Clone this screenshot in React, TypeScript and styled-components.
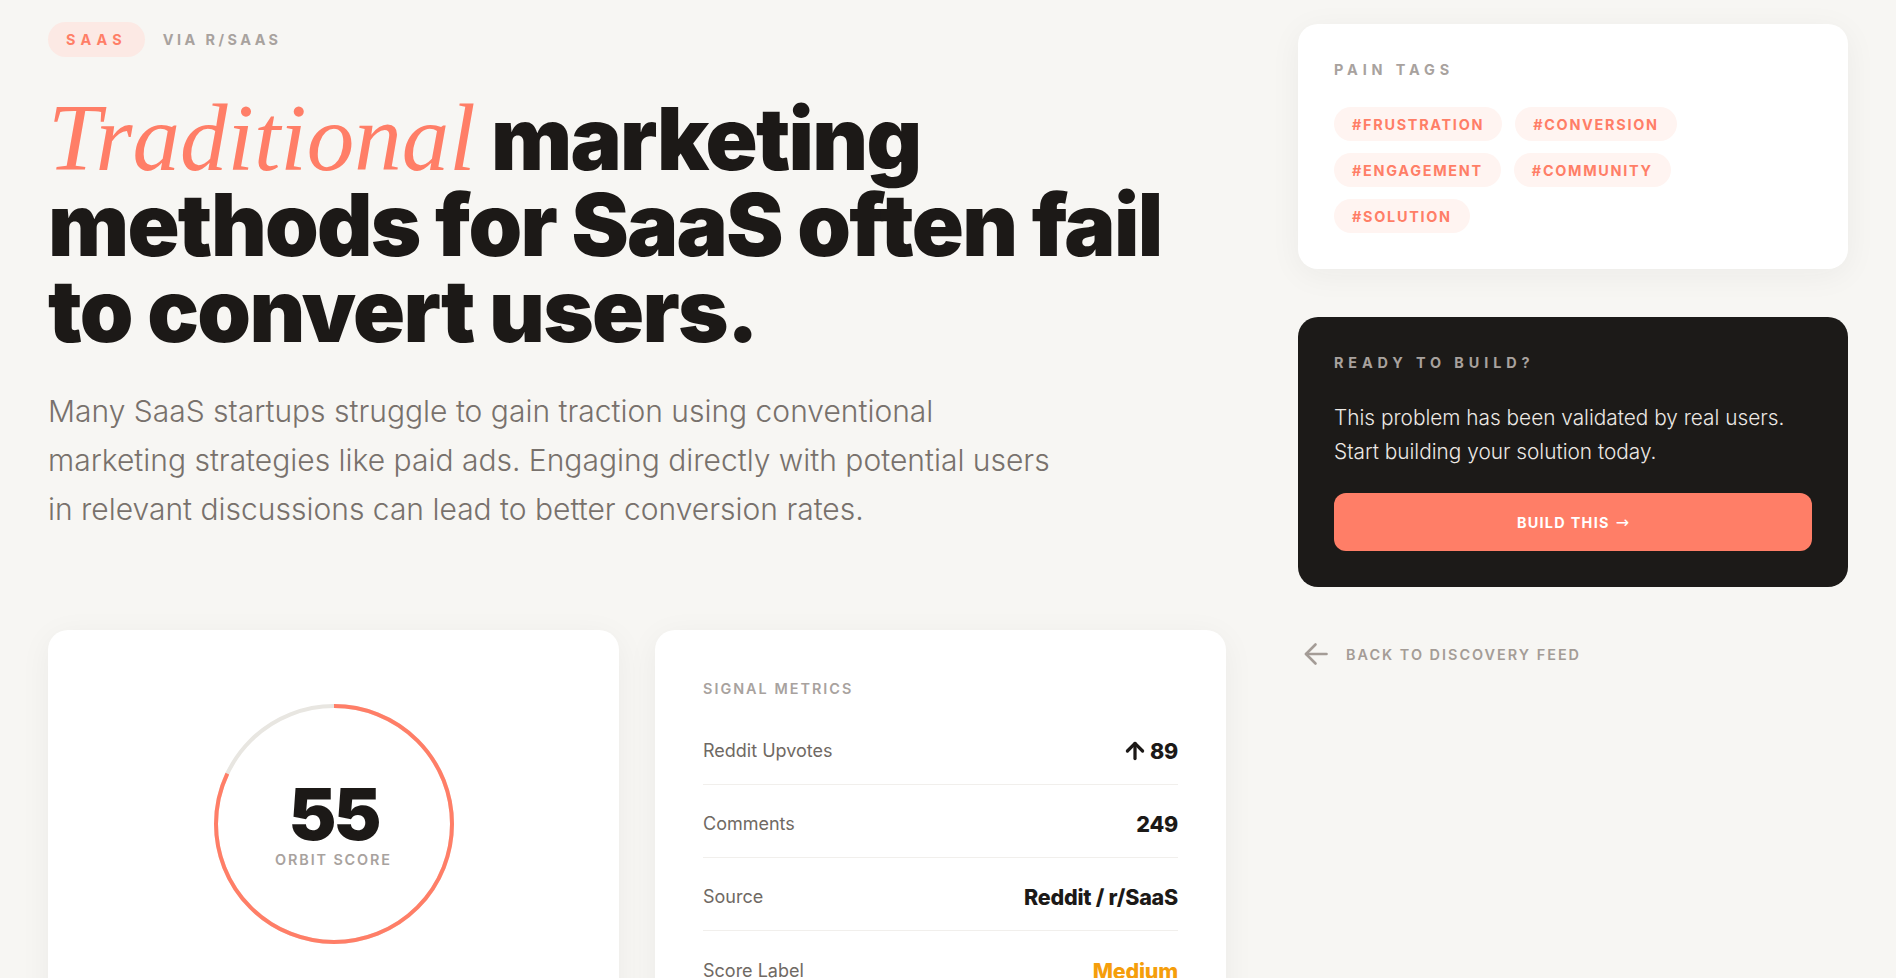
import React from "react";
import styled, { createGlobalStyle } from "styled-components";
import { ArrowUp } from "lucide-react";

const CORAL = "#ff7e67";
const INK = "#1c1917";
const MUTED = "#a8a29e";

const GlobalStyle = createGlobalStyle`
  html, body {
    margin: 0;
    padding: 0;
    background: #f7f6f3;
  }
  body {
    font-family: Inter, "Noto Sans", "Liberation Sans", sans-serif;
    color: ${INK};
    -webkit-font-smoothing: antialiased;
  }
  * { box-sizing: border-box; }
`;

const Page = styled.div`
  display: grid;
  grid-template-columns: 1fr 550px;
  column-gap: 72px;
  align-items: start;
  padding: 22px 48px 48px;
`;

const Main = styled.main`
  display: flex;
  flex-direction: column;
  min-width: 0;
`;

const MetaRow = styled.div`
  display: flex;
  align-items: center;
  gap: 18px;
`;

const CategoryPill = styled.span`
  display: inline-flex;
  align-items: center;
  height: 35px;
  padding: 0 18px;
  border-radius: 999px;
  background: #fce9e4;
  color: ${CORAL};
  font-size: 14.4px;
  font-weight: 700;
  letter-spacing: 0.36em;
  text-transform: uppercase;
`;

const SourceText = styled.span`
  color: ${MUTED};
  font-size: 14.4px;
  font-weight: 700;
  letter-spacing: 0.24em;
  text-transform: uppercase;
`;

const Headline = styled.h1`
  margin: 38px 0 0;
  font-family: Inter, "Noto Sans", sans-serif;
  font-weight: 900;
  font-size: 86px;
  line-height: 86px;
  letter-spacing: -0.02em;
  color: ${INK};
`;

const Accent = styled.em`
  font-family: "Liberation Serif", "Times New Roman", serif;
  font-style: italic;
  font-weight: 400;
  font-size: 95px;
  letter-spacing: 0;
  color: ${CORAL};
`;

const Lead = styled.p`
  margin: 33px 0 0;
  max-width: 1030px;
  font-size: 30px;
  font-weight: 300;
  line-height: 49px;
  color: #78716c;
`;

const CardGrid = styled.div`
  margin-top: 96px;
  display: grid;
  grid-template-columns: 1fr 1fr;
  gap: 36px;
`;

const Card = styled.section<{ $dark?: boolean; $pad?: string }>`
  background: ${(p) => (p.$dark ? "#1c1a18" : "#ffffff")};
  border-radius: 20px;
  padding: ${(p) => p.$pad ?? "48px"};
  box-shadow: ${(p) =>
    p.$dark ? "none" : "0 6px 32px rgba(41, 37, 36, 0.05)"};
`;

const ScoreCard = styled(Card)`
  display: flex;
  justify-content: center;
  align-items: flex-start;
`;

const Ring = styled.div`
  position: relative;
  width: 240px;
  height: 240px;
`;

const RingCenter = styled.div`
  position: absolute;
  inset: 0;
  display: flex;
  flex-direction: column;
  align-items: center;
  justify-content: center;
`;

const ScoreValue = styled.div`
  font-size: 72px;
  font-weight: 900;
  line-height: 72px;
  letter-spacing: -0.04em;
  color: ${INK};
`;

const ScoreCaption = styled.div`
  font-size: 14.4px;
  font-weight: 600;
  line-height: 20px;
  letter-spacing: 0.13em;
  color: ${MUTED};
  text-transform: uppercase;
`;

const Eyebrow = styled.div<{ $wide?: boolean; $gap?: number }>`
  font-size: 14.4px;
  font-weight: ${(p) => (p.$wide ? 700 : 600)};
  line-height: 20px;
  letter-spacing: ${(p) => (p.$wide ? "0.34em" : "0.14em")};
  text-transform: uppercase;
  color: ${MUTED};
  margin-bottom: ${(p) => p.$gap ?? 16}px;
`;

const MetricCard = styled(Card)`
  padding-top: 49px;
`;

const MetricList = styled.div`
  display: flex;
  flex-direction: column;
`;

const MetricRow = styled.div<{ $last?: boolean }>`
  display: flex;
  align-items: center;
  justify-content: space-between;
  padding: 27px 0 21px;
  height: 73px;
  line-height: 24px;
  border-bottom: ${(p) => (p.$last ? "none" : "1px solid #f1efec")};
`;

const MetricLabel = styled.span`
  font-size: 18px;
  font-weight: 400;
  color: #6f6963;
`;

const MetricValue = styled.span<{ $tone?: string }>`
  display: inline-flex;
  align-items: center;
  gap: 2px;
  font-size: 21.5px;
  font-weight: 800;
  letter-spacing: -0.01em;
  color: ${(p) => p.$tone ?? INK};
`;

const Side = styled.aside`
  display: flex;
  flex-direction: column;
  gap: 48px;
  padding-top: 2px;
`;

const TagList = styled.div`
  display: flex;
  flex-wrap: wrap;
  gap: 12px 13px;
`;

const Tag = styled.span`
  display: inline-flex;
  align-items: center;
  height: 34px;
  padding: 0 18px;
  border-radius: 999px;
  background: #fff4f1;
  color: ${CORAL};
  font-size: 14.4px;
  font-weight: 700;
  letter-spacing: 0.12em;
  text-transform: uppercase;
`;

const CtaText = styled.p`
  margin: 0 0 24px;
  font-size: 20.8px;
  font-weight: 300;
  line-height: 34px;
  color: #ece8e4;
`;

const BuildButton = styled.button`
  display: flex;
  align-items: center;
  justify-content: center;
  gap: 6px;
  width: 100%;
  height: 58px;
  border: none;
  border-radius: 12px;
  background: ${CORAL};
  color: #ffffff;
  font-family: inherit;
  font-size: 14.4px;
  font-weight: 700;
  letter-spacing: 0.09em;
  text-transform: uppercase;
  cursor: pointer;
`;

const ButtonArrow = styled.span`
  font-family: "DejaVu Sans", sans-serif;
  font-weight: 400;
  font-size: 16px;
  letter-spacing: 0;
`;

const BackLink = styled.a`
  display: flex;
  align-items: center;
  gap: 18px;
  margin-top: 7px;
  padding-left: 6px;
  color: #a49c96;
  font-size: 14.4px;
  font-weight: 600;
  letter-spacing: 0.14em;
  text-transform: uppercase;
  text-decoration: none;
`;

const R = 118;
const C = 2 * Math.PI * R;

function ScoreRing({ score, fraction }: { score: number; fraction: number }) {
  return (
    <Ring>
      <svg width="240" height="240" viewBox="0 0 240 240">
        <circle cx="120" cy="120" r={R} fill="none" stroke="#e8e6e1" strokeWidth="4" />
        <circle
          cx="120"
          cy="120"
          r={R}
          fill="none"
          stroke={CORAL}
          strokeWidth="4"
          strokeDasharray={`${C * fraction} ${C}`}
          transform="rotate(-90 120 120)"
        />
      </svg>
      <RingCenter>
        <ScoreValue>{score}</ScoreValue>
        <ScoreCaption>Orbit Score</ScoreCaption>
      </RingCenter>
    </Ring>
  );
}

function BackArrow() {
  return (
    <svg width="24" height="24" viewBox="0 0 24 24" fill="none" stroke="currentColor" strokeWidth="2.6" strokeLinecap="round" strokeLinejoin="round">
      <path d="M22.5 12H2" />
      <path d="M11.5 2.5L2 12l9.5 9.5" />
    </svg>
  );
}

const tags = ["#frustration", "#conversion", "#engagement", "#community", "#solution"];

export default function App() {
  return (
    <>
      <GlobalStyle />
      <Page>
        <Main>
          <MetaRow>
            <CategoryPill>SaaS</CategoryPill>
            <SourceText>via r/SaaS</SourceText>
          </MetaRow>
          <Headline>
            <Accent>Traditional</Accent> marketing methods for SaaS often fail to convert users.
          </Headline>
          <Lead>
            Many SaaS startups struggle to gain traction using conventional marketing strategies
            like paid ads. Engaging directly with potential users in relevant discussions can lead
            to better conversion rates.
          </Lead>
          <CardGrid>
            <ScoreCard $pad="74px 48px 48px">
              <ScoreRing score={55} fraction={0.82} />
            </ScoreCard>
            <MetricCard>
              <Eyebrow $gap={13}>Signal Metrics</Eyebrow>
              <MetricList>
                <MetricRow>
                  <MetricLabel>Reddit Upvotes</MetricLabel>
                  <MetricValue>
                    <ArrowUp size={26} strokeWidth={3} />
                    89
                  </MetricValue>
                </MetricRow>
                <MetricRow>
                  <MetricLabel>Comments</MetricLabel>
                  <MetricValue>249</MetricValue>
                </MetricRow>
                <MetricRow>
                  <MetricLabel>Source</MetricLabel>
                  <MetricValue>Reddit / r/SaaS</MetricValue>
                </MetricRow>
                <MetricRow $last>
                  <MetricLabel>Score Label</MetricLabel>
                  <MetricValue $tone="#f59e0b">Medium</MetricValue>
                </MetricRow>
              </MetricList>
            </MetricCard>
          </CardGrid>
        </Main>
        <Side>
          <Card $pad="36px">
            <Eyebrow $wide $gap={27}>Pain Tags</Eyebrow>
            <TagList>
              {tags.map((t) => (
                <Tag key={t}>{t}</Tag>
              ))}
            </TagList>
          </Card>
          <Card $dark $pad="36px">
            <Eyebrow $wide $gap={28}>Ready to build?</Eyebrow>
            <CtaText>
              This problem has been validated by real users.
              <br />
              Start building your solution today.
            </CtaText>
            <BuildButton>
              Build this <ButtonArrow>→</ButtonArrow>
            </BuildButton>
          </Card>
          <BackLink href="#">
            <BackArrow />
            Back to discovery feed
          </BackLink>
        </Side>
      </Page>
    </>
  );
}
